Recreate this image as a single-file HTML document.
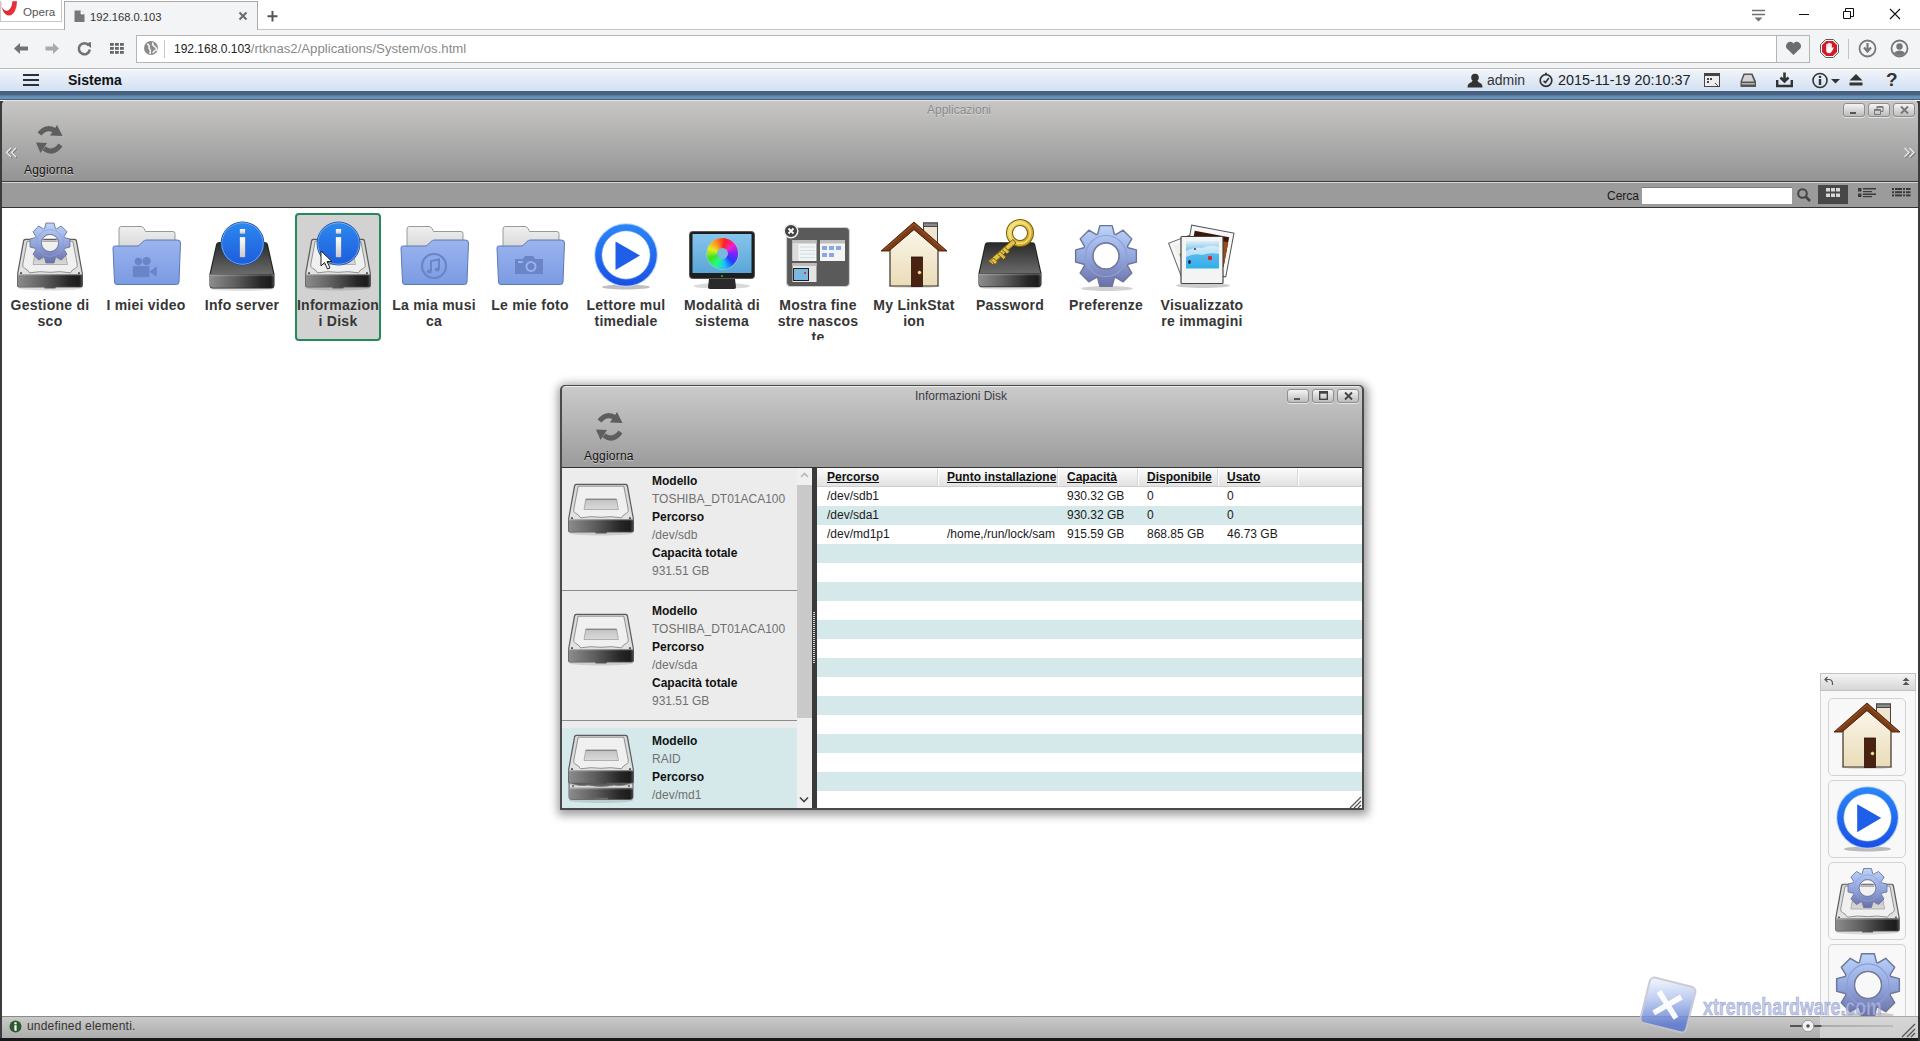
<!DOCTYPE html>
<html><head><meta charset="utf-8">
<style>
*{margin:0;padding:0;box-sizing:border-box}
html,body{width:1920px;height:1041px;overflow:hidden;background:#fff;font-family:"Liberation Sans",sans-serif;position:relative}
.a{position:absolute}
svg{position:absolute;overflow:visible}
</style></head><body>
<!-- browser tab strip -->
<div class="a" style="left:0;top:0;width:1920px;height:29px;background:#fff"></div>
<div class="a" style="left:0;top:29px;width:1920px;height:1px;background:#c6c6c6"></div>
<div class="a" style="left:0;top:0;width:62px;height:22px;border-right:1px solid #c8c8c8;border-bottom:1px solid #c8c8c8;background:#fff"></div>
<div class="a" style="left:64px;top:1px;width:194px;height:29px;background:#f3f4f6;border:1px solid #a9a9a9;border-bottom:none"></div>
<!-- toolbar -->
<div class="a" style="left:0;top:30px;width:1920px;height:38px;background:#f3f4f6"></div>
<div class="a" style="left:65px;top:29px;width:192px;height:2px;background:#f3f4f6"></div>
<div class="a" style="left:0;top:68px;width:1920px;height:1px;background:#b9b9b9"></div>
<div class="a" style="left:136px;top:35px;width:1674px;height:28px;background:#fff;border:1px solid #b5b5b5"></div>
<div class="a" style="left:1776px;top:36px;width:33px;height:26px;background:#f3f4f6;border-left:1px solid #b5b5b5"></div>
<!-- app header -->
<div class="a" style="left:0;top:69px;width:1920px;height:22px;background:linear-gradient(#f2f5fa,#d2e0f2)"></div>
<div class="a" style="left:0;top:69px;width:1920px;height:1px;background:#fcfdff"></div><div class="a" style="left:0;top:90px;width:1920px;height:1px;background:#d8e6f8"></div><div class="a" style="left:0;top:91px;width:1920px;height:8px;background:linear-gradient(#465e7a 0px,#4a6686 4px,#5f8ab6 5px,#6b97c2 8px)"></div><div class="a" style="left:0;top:99px;width:1920px;height:1px;background:#505c6c"></div>
<!-- apps window -->
<div class="a" style="left:0;top:101px;width:1920px;height:940px;background:#3c3c3c"></div>
<div class="a" style="left:2px;top:100px;width:1916px;height:82px;border-radius:5px 5px 0 0;background:linear-gradient(#c8c7c6,#939393);border-top:1px solid #e6e6e6"></div>
<div class="a" style="left:2px;top:181px;width:1916px;height:1px;background:#3a3a3a"></div>
<div class="a" style="left:2px;top:182px;width:1916px;height:1px;background:#d8d8d8"></div>
<div class="a" style="left:2px;top:183px;width:1916px;height:24px;background:#9b9b9b"></div>
<div class="a" style="left:2px;top:207px;width:1916px;height:1px;background:#333"></div>
<div class="a" style="left:2px;top:208px;width:1916px;height:808px;background:#fff"></div>
<div class="a" style="left:2px;top:1016px;width:1916px;height:22px;background:linear-gradient(#c9c9c9,#adadad);border-top:1px solid #8a8a8a"></div>

<div class="a" style="left:0;top:1038px;width:1920px;height:3px;background:#181818"></div>

<svg width="0" height="0" style="position:absolute;left:0;top:0">
<defs>
<linearGradient id="gTop" x1="0" y1="0" x2="0" y2="1"><stop offset="0" stop-color="#d8d8d8"/><stop offset="1" stop-color="#e2e2e2"/></linearGradient>
<linearGradient id="gFront" x1="0" y1="0" x2="1" y2="0"><stop offset="0" stop-color="#8c8c8c"/><stop offset="0.4" stop-color="#5e5e5e"/><stop offset="0.8" stop-color="#262626"/><stop offset="0.95" stop-color="#1c1c1c"/><stop offset="1" stop-color="#4a4a4a"/></linearGradient>
<linearGradient id="gFrontV" x1="0" y1="0" x2="0" y2="1"><stop offset="0" stop-color="#fff" stop-opacity="0.35"/><stop offset="0.5" stop-color="#fff" stop-opacity="0"/></linearGradient>
<linearGradient id="gInner" x1="0" y1="0" x2="0" y2="1"><stop offset="0" stop-color="#c2c2c2"/><stop offset="1" stop-color="#dadada"/></linearGradient>
<linearGradient id="gBlackTop" x1="0" y1="0" x2="0" y2="1"><stop offset="0" stop-color="#2a2a2a"/><stop offset="1" stop-color="#6a6a6a"/></linearGradient>
<linearGradient id="gInfo" x1="0" y1="0" x2="0" y2="1"><stop offset="0" stop-color="#2c88ee"/><stop offset="1" stop-color="#1e5cdc"/></linearGradient>
<linearGradient id="gI" x1="0" y1="0" x2="0" y2="1"><stop offset="0" stop-color="#fff"/><stop offset="1" stop-color="#c8c8c8"/></linearGradient>
<linearGradient id="gFold" x1="0" y1="0" x2="0" y2="1"><stop offset="0" stop-color="#9ab4ee"/><stop offset="1" stop-color="#7b9be2"/></linearGradient>
<linearGradient id="gFoldBack" x1="0" y1="0" x2="0" y2="1"><stop offset="0" stop-color="#f0f0f0"/><stop offset="1" stop-color="#c4c4c4"/></linearGradient>
<linearGradient id="gGear" x1="0" y1="0" x2="0" y2="1"><stop offset="0" stop-color="#bcd4fa"/><stop offset="0.5" stop-color="#94a8e0"/><stop offset="1" stop-color="#6a70a8"/></linearGradient>
<linearGradient id="gHouse" x1="0" y1="0" x2="0" y2="1"><stop offset="0" stop-color="#fbf6ea"/><stop offset="1" stop-color="#eadcb8"/></linearGradient>
<linearGradient id="gKey" x1="0" y1="0" x2="1" y2="1"><stop offset="0" stop-color="#f6e27a"/><stop offset="1" stop-color="#c8a020"/></linearGradient>
<linearGradient id="gScreen" x1="0" y1="0" x2="0" y2="1"><stop offset="0" stop-color="#86c4ec"/><stop offset="1" stop-color="#5aa6d8"/></linearGradient>
<linearGradient id="gSky" x1="0" y1="0" x2="0" y2="1"><stop offset="0" stop-color="#e0eef8"/><stop offset="0.45" stop-color="#5ab8ec"/><stop offset="1" stop-color="#30b0e8"/></linearGradient>
<linearGradient id="gPlay" x1="0" y1="0" x2="0" y2="1"><stop offset="0" stop-color="#2a86f8"/><stop offset="1" stop-color="#1a50e4"/></linearGradient>
<linearGradient id="gBtn" x1="0" y1="0" x2="0" y2="1"><stop offset="0" stop-color="#f2f2f2"/><stop offset="1" stop-color="#bdbdbd"/></linearGradient>

<symbol id="hdd" viewBox="0 0 66 52" overflow="visible">
 <ellipse cx="33" cy="50" rx="32" ry="2.5" fill="#000" opacity="0.13"/>
 <path d="M8 0.7 H58 Q59.5 0.7 60 2.5 L66 36 V47.5 Q66 49.5 64 49.5 H38.5 V50.5 H27.5 V49.5 H2 Q0 49.5 0 47.5 V36 L6 2.5 Q6.5 0.7 8 0.7Z" fill="#5c5c5c"/>
 <path d="M8.8 1.9 H57.2 Q58.4 1.9 58.8 3.2 L64.8 36 H1.2 L7.2 3.2 Q7.6 1.9 8.8 1.9Z" fill="url(#gTop)"/>
 <path d="M10.2 3.2 H55.8 L60.2 26 Q60.8 29 58.6 30.2 Q55 31.5 53.5 34.8 Q43 32.8 33 34.3 Q23 32.8 12.5 34.8 Q11 31.5 7.4 30.2 Q5.2 29 5.8 26 Z" fill="#f0f0f0" stroke="#7a7a7a" stroke-width="0.8"/>
 <path d="M17.8 16.1 H48.6 L50.4 26.5 H16Z" fill="url(#gInner)" stroke="#8c8c8c" stroke-width="0.6"/>
 <path d="M17.8 16.3 H48.6" stroke="#777" stroke-width="0.9"/>
 <circle cx="4" cy="35.2" r="1.1" fill="#555"/><circle cx="62" cy="35.2" r="1.1" fill="#555"/>
 <path d="M0.7 36 H65.3 V47.3 Q65.3 48.8 63.8 48.8 H38.5 V49.8 H27.5 V48.8 H2.2 Q0.7 48.8 0.7 47.3Z" fill="url(#gFront)"/>
 <path d="M0.7 36 H65.3 V37.2 H0.7Z" fill="#c8c8c8" opacity="0.6"/>
</symbol>

<symbol id="hddblack" viewBox="0 0 66 52" overflow="visible">
 <ellipse cx="33" cy="50.5" rx="32" ry="2.5" fill="#000" opacity="0.12"/>
 <path d="M10 4 H56 Q58.5 4 59 6.5 L65.5 36 V47 Q65.5 50.5 62 50.5 H4 Q0.5 50.5 0.5 47 V36 L7 6.5 Q7.5 4 10 4Z" fill="#222"/>
 <path d="M10.5 5 H55.5 Q57.5 5 58 7 L64.3 36 H1.7 L8 7 Q8.5 5 10.5 5Z" fill="url(#gBlackTop)"/>
 <path d="M1 36.5 H65 V47 Q65 49.8 62 49.8 H4 Q1 49.8 1 47Z" fill="url(#gFront)"/>
 <path d="M1 36.5 H65 V41 H1Z" fill="url(#gFrontV)"/>
</symbol>

<symbol id="info" viewBox="0 0 46 46" overflow="visible">
 <circle cx="23" cy="23" r="22.4" fill="#1d4c9a"/>
 <circle cx="23" cy="23" r="21.6" fill="#78b0f4"/>
 <circle cx="23" cy="23" r="20.8" fill="url(#gInfo)"/>
 <rect x="20.3" y="8.2" width="5.4" height="4.8" fill="url(#gI)"/>
 <rect x="20.3" y="16.5" width="5.4" height="20.5" fill="url(#gI)"/>
</symbol>

<symbol id="gear" viewBox="-32 -32 64 64" overflow="visible">
 <path id="gearpath" d="M-8.99 -21.71 L-8.28 -21.99 L-6.16 -30.38 L6.16 -30.38 L8.28 -21.99 L8.99 -21.71 L9.70 -21.41 L17.13 -25.84 L25.84 -17.13 L21.41 -9.70 L21.71 -8.99 L21.99 -8.28 L30.38 -6.16 L30.38 6.16 L21.99 8.28 L21.71 8.99 L21.41 9.70 L25.84 17.13 L17.13 25.84 L9.70 21.41 L8.99 21.71 L8.28 21.99 L6.16 30.38 L-6.16 30.38 L-8.28 21.99 L-8.99 21.71 L-9.70 21.41 L-17.13 25.84 L-25.84 17.13 L-21.41 9.70 L-21.71 8.99 L-21.99 8.28 L-30.38 6.16 L-30.38 -6.16 L-21.99 -8.28 L-21.71 -8.99 L-21.41 -9.70 L-25.84 -17.13 L-17.13 -25.84 L-9.70 -21.41Z M13 0 A13 13 0 1 0 -13 0 A13 13 0 1 0 13 0Z" fill-rule="evenodd" fill="url(#gGear)" stroke="#6c7696" stroke-width="1.4" stroke-linejoin="round"/>
 <circle r="20.5" fill="none" stroke="#8e9ed4" stroke-width="1.1"/>
 <circle r="13" fill="none" stroke="#767c9c" stroke-width="1.3"/><circle r="11.8" fill="none" stroke="#fff" stroke-width="1" opacity="0.7"/>
</symbol>

<symbol id="folder" viewBox="0 0 70 60" overflow="visible">
 <path d="M7 3 Q7 0.5 9.5 0.5 H29 Q31 0.5 32 2.5 L33.5 5.5 H61 Q63 5.5 63 7.5 V40 H7Z" fill="url(#gFoldBack)" stroke="#9a9a9a" stroke-width="1"/>
 <path d="M1 22 Q1 20 3 20 H25 Q27 20 28.5 18 L31 15.5 Q32.5 14 34.5 14 H65.5 Q68.5 14 68.5 17 L67 56 Q67 58.5 64.5 58.5 H5 Q2.5 58.5 2.5 56Z" fill="url(#gFold)" stroke="#5f78b8" stroke-width="1"/>
</symbol>

<symbol id="house" viewBox="0 0 66 65" overflow="visible">
 <ellipse cx="33" cy="64" rx="26" ry="2" fill="#000" opacity="0.15"/>
 <rect x="42.5" y="1" width="14" height="22" fill="#f0e6d0" stroke="#444" stroke-width="1"/>
 <rect x="42.5" y="1" width="14" height="3.5" fill="#8a8a8a" stroke="#444" stroke-width="1"/>
 <path d="M9 27 L33 7 L57 27 V64 H9Z" fill="url(#gHouse)" stroke="#3a3028" stroke-width="1.2"/>
 <path d="M33 0 L66 29 H58 L33 7.5 L8 29 H0Z" fill="#7c3c16" stroke="#4a1e08" stroke-width="0.9" stroke-linejoin="round"/>
 <path d="M33 2 L63 28 M33 2 L3 28" stroke="#9a5428" stroke-width="1"/>
 <rect x="30.5" y="35" width="11" height="29.5" fill="#4a2212" stroke="#2a1208" stroke-width="0.8"/>
 <circle cx="38.5" cy="50.5" r="1.7" fill="#f8e8a0" stroke="#a08040" stroke-width="0.4"/>
</symbol>

<symbol id="play" viewBox="0 0 66 66" overflow="visible">
 <ellipse cx="33" cy="64" rx="24" ry="2.5" fill="#000" opacity="0.25"/>
 <circle cx="33" cy="32" r="31.8" fill="#b8d4f8"/>
 <circle cx="33" cy="32" r="30.8" fill="url(#gPlay)"/>
 <circle cx="33" cy="32" r="24.2" fill="#fff" stroke="#5a9af0" stroke-width="0.6"/>
 <path d="M22.5 18.5 L47 32.5 L22.5 47Z" fill="#1f5ee8"/>
</symbol>
</defs></svg>
<!-- opera logo & tab -->
<svg style="left:0;top:0" width="20" height="20"><defs><linearGradient id="op" x1="0" y1="0" x2="1" y2="1"><stop offset="0" stop-color="#a80c18"/><stop offset="1" stop-color="#ff3a44"/></linearGradient><clipPath id="opc"><rect x="1" y="1.2" width="18" height="18"/></clipPath></defs><path clip-path="url(#opc)" fill-rule="evenodd" fill="url(#op)" d="M1 1.5 A8 14 0 1 0 17 1.5 A8 14 0 1 0 1 1.5Z M0.5 0 A6 11 0 1 0 12.5 0 A6 11 0 1 0 0.5 0Z"/></svg><div class="a" style="left:0;top:1px;width:1px;height:21px;background:#c8c8c8"></div>
<div class="a" style="left:23px;top:4px;font-size:11.6px;line-height:16px;color:#555">Opera</div>
<svg style="left:74px;top:10px" width="12" height="13"><path d="M0.5 0.5 H7 L10.5 4 V12 H0.5Z" fill="#777"/><path d="M7 0.5 V4 H10.5" fill="#fff" stroke="#f3f4f6" stroke-width="0.8"/></svg>
<div class="a" style="left:90px;top:9px;font-size:11.2px;line-height:16px;color:#333">192.168.0.103</div>
<svg style="left:238px;top:11px" width="10" height="10"><path d="M1.5 1.5 L8.5 8.5 M8.5 1.5 L1.5 8.5" stroke="#6a6a6a" stroke-width="2"/></svg>
<svg style="left:267px;top:11px" width="12" height="11"><path d="M5.5 0 V10.5 M0.5 5.2 H10.5" stroke="#555" stroke-width="2"/></svg>
<!-- window controls -->
<svg style="left:1752px;top:9px" width="14" height="14"><path d="M0 1.5 H13 M0 5.5 H13" stroke="#707070" stroke-width="1.6"/><path d="M2.5 8.5 H10.5 L6.5 12.5Z" fill="#707070"/></svg>
<div class="a" style="left:1799px;top:14px;width:10px;height:1px;background:#111"></div>
<svg style="left:1843px;top:8px" width="12" height="12"><path d="M0.5 3.5 H7.5 V10.5 H0.5Z M2.5 3.5 V0.5 H10.5 V8.5 H7.5" fill="none" stroke="#111" stroke-width="1"/></svg>
<svg style="left:1889px;top:8px" width="12" height="12"><path d="M1 1 L11 11 M11 1 L1 11" stroke="#111" stroke-width="1.1"/></svg>
<!-- nav buttons -->
<svg style="left:13px;top:42px" width="16" height="13"><path d="M1 6.5 L7 1 V4.5 H15 V8.5 H7 V12Z" fill="#727272"/></svg>
<svg style="left:45px;top:42px" width="15" height="13"><path d="M14 6.5 L8 1 V4.5 H0.5 V8.5 H8 V12Z" fill="#a9a9a9"/></svg>
<svg style="left:77px;top:41px" width="15" height="15"><path d="M11.8 4.5 A5.5 5.5 0 1 0 12.8 8.5" fill="none" stroke="#727272" stroke-width="2.6"/><path d="M8.5 2.5 L14 1 L14 7Z" fill="#727272"/></svg>
<svg style="left:110px;top:43px" width="15" height="12"><g fill="#666"><rect x="0" y="0" width="3.8" height="2.8"/><rect x="0" y="4" width="3.8" height="2.8"/><rect x="0" y="8" width="3.8" height="2.8"/><rect x="5" y="0" width="3.8" height="2.8"/><rect x="5" y="4" width="3.8" height="2.8"/><rect x="5" y="8" width="3.8" height="2.8"/><rect x="10" y="0" width="3.8" height="2.8"/><rect x="10" y="4" width="3.8" height="2.8"/><rect x="10" y="8" width="3.8" height="2.8"/></g></svg>
<svg style="left:144px;top:41px" width="15" height="15"><circle cx="7" cy="7" r="7" fill="#8a8a8a"/><path d="M3 3 Q6 4 5 7 Q7 9 6 13 M9 1.5 Q8 4 10 5 Q12 6 13 9 Q10 9 9 12" fill="none" stroke="#f3f4f6" stroke-width="1.6"/></svg>
<div class="a" style="left:164px;top:40px;width:1px;height:18px;background:#c8c8c8"></div>
<div class="a" style="left:174px;top:41px;font-size:13.2px;line-height:16px;color:#8a8a8a;white-space:pre"><span style="color:#222;font-size:12px">192.168.0.103</span>/rtknas2/Applications/System/os.html</div>
<svg style="left:1785px;top:41px" width="17" height="15"><path d="M8.5 14 L1.8 7.5 A4 4 0 0 1 8.5 2.5 A4 4 0 0 1 15.2 7.5Z" fill="#6d6d6d"/></svg>
<svg style="left:1820px;top:39px" width="19" height="19"><path d="M5.6 0.5 H13.4 L18.5 5.6 V13.4 L13.4 18.5 H5.6 L0.5 13.4 V5.6Z" fill="#fff" stroke="#5a5a5a" stroke-width="1"/><path d="M6.1 2 H12.9 L17 6.1 V12.9 L12.9 17 H6.1 L2 12.9 V6.1Z" fill="#d41c26"/><path d="M6.2 9.5 V5.6 Q6.2 4.9 6.9 4.9 Q7.6 4.9 7.6 5.6 V4.6 Q7.6 3.9 8.3 3.9 Q9 3.9 9 4.6 V4.4 Q9 3.7 9.7 3.7 Q10.4 3.7 10.4 4.4 V5 Q10.4 4.4 11.1 4.4 Q11.8 4.4 11.8 5.1 V9.2 L12.6 8.4 Q13.3 7.9 13.9 8.5 L12 12.3 Q11 14.2 9.1 14.2 Q6.2 14.2 6.2 11.2Z" fill="#fff"/><path d="M7.6 5.2 V8 M9 4.6 V8 M10.4 4.6 V8" stroke="#e8c0c0" stroke-width="0.5"/></svg>
<div class="a" style="left:1848px;top:39px;width:1px;height:20px;background:#c4c4c4"></div>
<svg style="left:1858px;top:39px" width="19" height="19"><circle cx="9.5" cy="9.5" r="8" fill="none" stroke="#777" stroke-width="1.8"/><path d="M9.5 4 V11 M6 8.5 L9.5 12.5 L13 8.5" fill="none" stroke="#777" stroke-width="2.2"/></svg>
<svg style="left:1890px;top:39px" width="19" height="19"><defs><clipPath id="pc"><circle cx="9.5" cy="9.5" r="7.2"/></clipPath></defs><circle cx="9.5" cy="9.5" r="8" fill="none" stroke="#777" stroke-width="1.8"/><g clip-path="url(#pc)" fill="#777"><circle cx="9.5" cy="7.5" r="3.2"/><ellipse cx="9.5" cy="17" rx="6.5" ry="5.5"/></g></svg>
<!-- app header -->
<svg style="left:23px;top:74px" width="16" height="13"><path d="M0 1 H16 M0 6 H16 M0 11 H16" stroke="#2b2f36" stroke-width="2"/></svg>
<div class="a" style="left:68px;top:72px;font-size:14px;line-height:16px;font-weight:bold;color:#111">Sistema</div>
<svg style="left:1467px;top:73px" width="16" height="15"><circle cx="8" cy="4.5" r="3.8" fill="#333"/><path d="M5.5 7.5 Q5 9.5 2 10.5 Q0.5 11.3 0.5 14.5 H15.5 Q15.5 11.3 14 10.5 Q11 9.5 10.5 7.5Z" fill="#333"/></svg>
<div class="a" style="left:1487px;top:72px;font-size:14px;line-height:16px;color:#333">admin</div>
<svg style="left:1539px;top:73px" width="15" height="15"><circle cx="7" cy="7.5" r="5.8" fill="none" stroke="#333" stroke-width="1.7"/><path d="M4.5 8 L6.5 9.5 L9.8 5" fill="none" stroke="#333" stroke-width="1.6"/><path d="M6 0.5 H8" stroke="#333" stroke-width="1.5"/></svg>
<div class="a" style="left:1558px;top:72px;font-size:14.4px;line-height:16px;color:#222;white-space:pre">2015-11-19 20:10:37</div>
<svg style="left:1704px;top:73px" width="17" height="15"><rect x="0.5" y="0.5" width="15" height="13" fill="#eee" stroke="#444"/><rect x="0.5" y="0.5" width="15" height="2.5" fill="#444"/><rect x="3" y="5" width="2" height="2" fill="#444"/><rect x="3" y="8" width="2" height="2" fill="#444"/><rect x="6" y="5" width="2" height="2" fill="#444"/><path d="M11 10 L14 13" stroke="#444"/></svg>
<svg style="left:1740px;top:73px" width="17" height="15"><path d="M3.5 0.5 H12.5 L16 8.5 V14 H0.5 V8.5Z" fill="#555"/><path d="M4.6 2 H11.4 L14 8.5 H2Z" fill="#d4d4d4"/><rect x="1.8" y="10.2" width="13" height="1.2" fill="#ccc"/></svg>
<svg style="left:1776px;top:72px" width="17" height="16"><path d="M8.5 0.5 V9 M4.5 5.5 L8.5 9.5 L12.5 5.5" fill="none" stroke="#333" stroke-width="2.6"/><path d="M1.2 8 V14 H15.8 V8" fill="none" stroke="#333" stroke-width="2.4"/></svg>
<svg style="left:1812px;top:72px" width="30" height="17"><circle cx="8" cy="8.5" r="7" fill="none" stroke="#333" stroke-width="1.6"/><rect x="6.8" y="3.8" width="2.4" height="2.2" fill="#333"/><rect x="6.8" y="7" width="2.4" height="6" fill="#333"/><path d="M19 7 H28 L23.5 11.5Z" fill="#333"/></svg>
<svg style="left:1849px;top:73px" width="14" height="14"><path d="M7 1 L13.5 7.5 H0.5Z" fill="#333"/><rect x="0.5" y="9.5" width="13" height="3" fill="#333"/></svg>
<div class="a" style="left:1886px;top:69px;font-size:19px;line-height:22px;font-weight:bold;color:#333">?</div>
<svg style="left:36px;top:125px" width="28" height="30"><path d="M3.5 9 Q11 0 19.5 6" fill="none" stroke="#5e5e5e" stroke-width="5"/><path d="M21 0 L26.5 11 L14 10.5Z" fill="#5e5e5e"/><path d="M24.5 20 Q17 30 8 23.5" fill="none" stroke="#5e5e5e" stroke-width="5"/><path d="M0 17.5 L11 18 L4.5 28Z" fill="#5e5e5e"/></svg>
<div class="a" style="left:24px;top:163px;font-size:12px;line-height:14px;color:#111;letter-spacing:0.2px;text-shadow:0 1px 1px rgba(255,255,255,0.6)">Aggiorna</div>
<svg style="left:5px;top:147px" width="14" height="12"><path d="M6 1 L1.5 5.5 L6 10 M11 1 L6.5 5.5 L11 10" fill="none" stroke="#777" stroke-width="1.6" transform="translate(0.8 0.8)"/><path d="M6 1 L1.5 5.5 L6 10 M11 1 L6.5 5.5 L11 10" fill="none" stroke="#eee" stroke-width="1.3"/></svg>
<svg style="left:1903px;top:147px" width="14" height="12"><path d="M1.5 1 L6 5.5 L1.5 10 M6.5 1 L11 5.5 L6.5 10" fill="none" stroke="#777" stroke-width="1.6" transform="translate(0.8 0.8)"/><path d="M1.5 1 L6 5.5 L1.5 10 M6.5 1 L11 5.5 L6.5 10" fill="none" stroke="#eee" stroke-width="1.3"/></svg>
<div class="a" style="left:927px;top:103px;font-size:12px;line-height:14px;color:#8a8a8a;text-shadow:0 1px 0 rgba(255,255,255,0.4)">Applicazioni</div>
<div class="a" style="left:1843px;top:103px;width:22px;height:14px;border:1px solid #8e8e8e;border-radius:3px;background:linear-gradient(#f4f4f4,#bcbcbc);box-shadow:0 1px 0 rgba(255,255,255,0.6)"></div><div class="a" style="left:1850px;top:112px;width:6px;height:2px;background:#555"></div><div class="a" style="left:1868px;top:103px;width:22px;height:14px;border:1px solid #8e8e8e;border-radius:3px;background:linear-gradient(#f4f4f4,#bcbcbc);box-shadow:0 1px 0 rgba(255,255,255,0.6)"></div><svg style="left:1874px;top:106px" width="10" height="9"><path d="M0.5 3.5 H6.5 V8.5 H0.5Z M3 3.5 V0.5 H9 V5.5 H6.5" fill="none" stroke="#777" stroke-width="1"/><rect x="3" y="0.5" width="6" height="1.3" fill="#777"/><rect x="0.5" y="3.5" width="6" height="1.3" fill="#777"/></svg><div class="a" style="left:1893px;top:103px;width:22px;height:14px;border:1px solid #8e8e8e;border-radius:3px;background:linear-gradient(#f4f4f4,#bcbcbc);box-shadow:0 1px 0 rgba(255,255,255,0.6)"></div><svg style="left:1900px;top:105px" width="9" height="10"><path d="M1 1.5 L8 8.5 M8 1.5 L1 8.5" stroke="#777" stroke-width="1.8"/></svg>
<div class="a" style="left:1607px;top:189px;font-size:12px;line-height:14px;color:#1a1a1a">Cerca</div>
<div class="a" style="left:1642px;top:187px;width:150px;height:17px;background:#fff;border-top:1px solid #7a7a7a"></div>
<svg style="left:1797px;top:188px" width="15" height="14"><circle cx="5.5" cy="5.5" r="4.3" fill="none" stroke="#444" stroke-width="2"/><path d="M8.5 8.5 L13 13" stroke="#444" stroke-width="2.6"/></svg>
<div class="a" style="left:1818px;top:185px;width:30px;height:19px;background:#474747"></div>
<svg style="left:1826px;top:188px" width="15" height="10"><g fill="#d8d8d8"><rect x="0" y="0" width="4" height="3.5"/><rect x="5" y="0" width="4" height="3.5"/><rect x="10" y="0" width="4" height="3.5"/><rect x="0" y="5.5" width="4" height="3.5"/><rect x="5" y="5.5" width="4" height="3.5"/><rect x="10" y="5.5" width="4" height="3.5"/></g></svg>
<svg style="left:1858px;top:188px" width="19" height="10"><g fill="#3a3a3a"><rect x="0" y="0" width="3.5" height="3.5"/><rect x="0" y="5.5" width="3.5" height="3.5"/><rect x="5" y="0" width="13" height="1.5"/><rect x="5" y="3" width="9" height="1.2"/><rect x="5" y="5.5" width="13" height="1.5"/><rect x="5" y="8" width="9" height="1.2"/></g></svg>
<svg style="left:1892px;top:188px" width="19" height="9"><g fill="#3a3a3a"><rect x="0" y="0" width="2" height="2"/><rect x="0" y="3.2" width="2" height="2"/><rect x="0" y="6.4" width="2" height="2"/><rect x="3" y="0" width="7" height="2"/><rect x="3" y="3.2" width="7" height="2"/><rect x="3" y="6.4" width="7" height="2"/><rect x="11" y="0" width="2" height="2"/><rect x="11" y="3.2" width="2" height="2"/><rect x="11" y="6.4" width="2" height="2"/><rect x="14" y="0" width="4.5" height="2"/><rect x="14" y="3.2" width="4.5" height="2"/><rect x="14" y="6.4" width="4.5" height="2"/></g></svg>
<div class="a" style="left:295px;top:213px;width:86px;height:128px;border:2px solid #27885e;border-radius:4px;background:#d2d2d2"></div>
<div class="a" style="left:2px;top:297px;width:96px;height:43px;overflow:hidden;text-align:center;font-size:14px;line-height:16px;font-weight:bold;color:#363636;letter-spacing:0.25px">Gestione di<br>sco</div>
<div class="a" style="left:98px;top:297px;width:96px;height:43px;overflow:hidden;text-align:center;font-size:14px;line-height:16px;font-weight:bold;color:#363636;letter-spacing:0.25px">I miei video</div>
<div class="a" style="left:194px;top:297px;width:96px;height:43px;overflow:hidden;text-align:center;font-size:14px;line-height:16px;font-weight:bold;color:#363636;letter-spacing:0.25px">Info server</div>
<div class="a" style="left:290px;top:297px;width:96px;height:43px;overflow:hidden;text-align:center;font-size:14px;line-height:16px;font-weight:bold;color:#363636;letter-spacing:0.25px">Informazion<br>i Disk</div>
<div class="a" style="left:386px;top:297px;width:96px;height:43px;overflow:hidden;text-align:center;font-size:14px;line-height:16px;font-weight:bold;color:#363636;letter-spacing:0.25px">La mia musi<br>ca</div>
<div class="a" style="left:482px;top:297px;width:96px;height:43px;overflow:hidden;text-align:center;font-size:14px;line-height:16px;font-weight:bold;color:#363636;letter-spacing:0.25px">Le mie foto</div>
<div class="a" style="left:578px;top:297px;width:96px;height:43px;overflow:hidden;text-align:center;font-size:14px;line-height:16px;font-weight:bold;color:#363636;letter-spacing:0.25px">Lettore mul<br>timediale</div>
<div class="a" style="left:674px;top:297px;width:96px;height:43px;overflow:hidden;text-align:center;font-size:14px;line-height:16px;font-weight:bold;color:#363636;letter-spacing:0.25px">Modalità di<br>sistema</div>
<div class="a" style="left:770px;top:297px;width:96px;height:43px;overflow:hidden;text-align:center;font-size:14px;line-height:16px;font-weight:bold;color:#363636;letter-spacing:0.25px">Mostra fine<br>stre nascos<br>te</div>
<div class="a" style="left:866px;top:297px;width:96px;height:43px;overflow:hidden;text-align:center;font-size:14px;line-height:16px;font-weight:bold;color:#363636;letter-spacing:0.25px">My LinkStat<br>ion</div>
<div class="a" style="left:962px;top:297px;width:96px;height:43px;overflow:hidden;text-align:center;font-size:14px;line-height:16px;font-weight:bold;color:#363636;letter-spacing:0.25px">Password</div>
<div class="a" style="left:1058px;top:297px;width:96px;height:43px;overflow:hidden;text-align:center;font-size:14px;line-height:16px;font-weight:bold;color:#363636;letter-spacing:0.25px">Preferenze</div>
<div class="a" style="left:1154px;top:297px;width:96px;height:43px;overflow:hidden;text-align:center;font-size:14px;line-height:16px;font-weight:bold;color:#363636;letter-spacing:0.25px">Visualizzato<br>re immagini</div>
<svg style="left:17px;top:238px" width="66" height="52"><use href="#hdd" width="66" height="52"/></svg>
<svg style="left:29px;top:222px" width="42" height="42"><use href="#gear" width="42" height="42"/></svg>
<svg style="left:112px;top:226px" width="70" height="60"><use href="#folder" width="70" height="60"/></svg>
<svg style="left:131px;top:255px;transform:scale(0.92);transform-origin:0 100%" width="34" height="24"><g fill="#6a84c8"><circle cx="8" cy="5" r="4"/><circle cx="17" cy="4.5" r="4.5"/><rect x="2" y="10" width="18" height="12"/><path d="M20 16 L27 11 V21Z"/><rect x="26" y="11" width="2" height="10"/></g></svg>
<svg style="left:209px;top:238px" width="66" height="52"><use href="#hddblack" width="66" height="52"/></svg>
<svg style="left:220px;top:221px" width="45" height="45"><use href="#info" width="45" height="45"/></svg>
<svg style="left:305px;top:238px" width="66" height="52"><use href="#hdd" width="66" height="52"/></svg>
<svg style="left:316px;top:221px" width="45" height="45"><use href="#info" width="45" height="45"/></svg>
<svg style="left:320px;top:250px" width="14" height="20"><path d="M1 1 V16 L4.5 12.5 L7.5 19 L10 18 L7 11.5 L12 11.5Z" fill="#fff" stroke="#222" stroke-width="1"/></svg>
<svg style="left:400px;top:226px" width="70" height="60"><use href="#folder" width="70" height="60"/></svg>
<svg style="left:420px;top:252px" width="30" height="30"><circle cx="14" cy="14" r="12" fill="none" stroke="#6a84c8" stroke-width="2.2"/><path d="M11 19 V9 L19 7.5 V17" fill="none" stroke="#6a84c8" stroke-width="2"/><ellipse cx="9.3" cy="19.5" rx="2.5" ry="2" fill="#6a84c8"/><ellipse cx="17.3" cy="17.5" rx="2.5" ry="2" fill="#6a84c8"/></svg>
<svg style="left:496px;top:226px" width="70" height="60"><use href="#folder" width="70" height="60"/></svg>
<svg style="left:515px;top:255px" width="30" height="22"><g fill="#6a84c8"><path d="M0 4 H8 L10 1 H18 L20 4 H28 V19 H0Z"/></g><circle cx="16" cy="11.5" r="5.5" fill="#9ab0ea"/><circle cx="16" cy="11.5" r="3.5" fill="#6a84c8"/><rect x="3" y="6" width="5" height="2" fill="#9ab0ea"/></svg>
<svg style="left:593px;top:223px" width="66" height="66"><use href="#play" width="66" height="66"/></svg>
<svg style="left:689px;top:231px" width="66" height="59"><ellipse cx="33" cy="55" rx="28" ry="3" fill="#000" opacity="0.15"/><rect x="0.5" y="0.5" width="65" height="47" rx="3" fill="#1e1e1e" stroke="#555" stroke-width="1"/><rect x="3.5" y="3" width="59" height="39" fill="url(#gScreen)"/><circle cx="33" cy="45" r="0.9" fill="#3c3"/><path d="M20 48 H46 L47 56 Q47 58 45 58 H21 Q19 58 19 56Z" fill="#2a2a2a"/></svg>
<div class="a" style="left:707px;top:238px;width:31px;height:31px;border-radius:50%;background:conic-gradient(from 10deg,#ff2020,#ff20c0,#8020ff,#2040ff,#20c0ff,#20ff80,#40e020,#e0f020,#ff9020,#ff2020);box-shadow:0 0 0 0.8px #9cc"></div><div class="a" style="left:717px;top:248px;width:11px;height:11px;border-radius:50%;background:#7ab8e0"></div>
<svg style="left:784px;top:223px" width="68" height="66"><rect x="2.5" y="4.5" width="63" height="59" rx="4" fill="#5a5a5a" stroke="#d0d0d0" stroke-width="1.2"/>
<rect x="8.5" y="17" width="24" height="21" fill="#f4f4f4"/><rect x="8.5" y="17" width="24" height="3.5" fill="#bdbdbd"/><rect x="8.5" y="20.5" width="6" height="17.5" fill="#dcdcdc"/><path d="M16 24 H31 M16 27.5 H31 M16 31 H31 M16 34.5 H31" stroke="#c8e0e8" stroke-width="1.2"/>
<rect x="36" y="17" width="25" height="21" fill="#f4f4f4"/><rect x="36" y="17" width="25" height="3.5" fill="#bdbdbd"/><g fill="#8aa8e0"><rect x="38" y="23" width="5" height="4"/><rect x="45" y="23" width="5" height="4"/><rect x="52" y="23" width="5" height="4"/><rect x="38" y="30" width="5" height="4"/><rect x="45" y="30" width="5" height="4"/></g>
<rect x="8.5" y="40" width="24" height="19" fill="#e4e4e4"/><rect x="8.5" y="40" width="24" height="3" fill="#bdbdbd"/><rect x="9" y="45" width="16" height="13" fill="#222"/><rect x="10" y="46" width="14" height="11" fill="#7ab8e0"/><circle cx="21" cy="50" r="1" fill="#c22"/>
<circle cx="7" cy="8" r="6.8" fill="#444" stroke="#eee" stroke-width="1.5"/><path d="M4.5 5.5 L9.5 10.5 M9.5 5.5 L4.5 10.5" stroke="#fff" stroke-width="1.8"/></svg>
<svg style="left:881px;top:222px" width="66" height="65"><use href="#house" width="66" height="65"/></svg>
<svg style="left:978px;top:238px" width="64" height="51"><use href="#hddblack" width="64" height="51"/></svg>
<svg style="left:984px;top:219px" width="52" height="48"><g stroke-linejoin="round">
<circle cx="36" cy="14" r="10.5" fill="none" stroke="#7a5a08" stroke-width="7"/>
<circle cx="36" cy="14" r="10.5" fill="none" stroke="url(#gKey)" stroke-width="5"/>
<circle cx="36" cy="14" r="10.5" fill="none" stroke="#fae88a" stroke-width="1.5" opacity="0.8"/>
<path d="M29 20.5 L32 24 L8.5 45.5 L4.5 42 Z" fill="url(#gKey)" stroke="#7a5a08" stroke-width="1"/>
<path d="M13.5 35 L19.5 40.5 L22 38 L16 32.5Z M18 30.5 L23 35 L25.5 32.5 L20.5 28Z M9.5 39 L13.5 43 L11 45.5 L7 41.5Z" fill="url(#gKey)" stroke="#7a5a08" stroke-width="1"/>
</g></svg>
<svg style="left:1073px;top:224px" width="68" height="68"><ellipse cx="34" cy="64.5" rx="26" ry="2.5" fill="#000" opacity="0.18"/><use href="#gear" x="1" y="0" width="64" height="64"/></svg>
<svg style="left:1168px;top:224px" width="67" height="64"><ellipse cx="35" cy="61.5" rx="27" ry="2.5" fill="#000" opacity="0.2"/>
<g transform="translate(0.6 19.2) rotate(-21)"><rect x="0" y="0" width="36" height="40" fill="#f6f6f6" stroke="#666" stroke-width="1"/><rect x="4" y="4" width="28" height="22" fill="#eef2ea"/><rect x="6" y="14" width="4" height="3" fill="#7b3"/></g>
<g transform="translate(23.7 1.2) rotate(10.6)"><rect x="0" y="0" width="43" height="44.6" fill="#f8f8f8" stroke="#555" stroke-width="1"/><rect x="4" y="5" width="35" height="30" fill="#3a1608"/><rect x="30" y="10" width="9" height="25" fill="#9a4a12"/></g>
<rect x="13" y="12.5" width="42" height="47" rx="1" fill="#f4f4f4" stroke="#444" stroke-width="1.2"/><rect x="18" y="17" width="33" height="27.5" fill="url(#gSky)"/><path d="M18 27 Q28 22 34 24 Q42 20 51 23 V30 Q42 28 34 31 Q26 29 18 33Z" fill="#e8f4fc" opacity="0.7"/><circle cx="42" cy="34" r="2.2" fill="#d22"/><ellipse cx="21.5" cy="38" rx="1.4" ry="2" fill="#224"/><circle cx="27" cy="25" r="0.9" fill="#222"/></svg><div class="a" style="left:560px;top:385px;width:804px;height:425px;background:#4a4a4a;border-radius:5px 5px 0 0;box-shadow:1px 2px 10px 3px rgba(0,0,0,0.4)"></div>
<div class="a" style="left:562px;top:386px;width:800px;height:81px;background:linear-gradient(#cacaca,#9b9b9b);border-top:1px solid #ececec;border-radius:4px 4px 0 0"></div>
<div class="a" style="left:562px;top:467px;width:800px;height:1px;background:#333"></div>
<div class="a" style="left:915px;top:389px;font-size:12px;line-height:14px;color:#3c3c44">Informazioni Disk</div>
<div class="a" style="left:1287px;top:389px;width:22px;height:14px;border:1px solid #8e8e8e;border-radius:3px;background:linear-gradient(#f4f4f4,#bcbcbc);box-shadow:0 1px 0 rgba(255,255,255,0.6)"></div><div class="a" style="left:1294px;top:398px;width:6px;height:2px;background:#555"></div><div class="a" style="left:1312px;top:389px;width:22px;height:14px;border:1px solid #8e8e8e;border-radius:3px;background:linear-gradient(#f4f4f4,#bcbcbc);box-shadow:0 1px 0 rgba(255,255,255,0.6)"></div><svg style="left:1319px;top:391px" width="9" height="10"><rect x="0.7" y="0.7" width="7.6" height="7.6" fill="none" stroke="#444" stroke-width="1.4"/><rect x="0.7" y="0.7" width="7.6" height="2" fill="#444"/></svg><div class="a" style="left:1337px;top:389px;width:22px;height:14px;border:1px solid #8e8e8e;border-radius:3px;background:linear-gradient(#f4f4f4,#bcbcbc);box-shadow:0 1px 0 rgba(255,255,255,0.6)"></div><svg style="left:1344px;top:391px" width="9" height="10"><path d="M1 1.5 L8 8.5 M8 1.5 L1 8.5" stroke="#444" stroke-width="1.8"/></svg>
<svg style="left:596px;top:412px" width="28" height="30"><path d="M3.5 9 Q11 0 19.5 6" fill="none" stroke="#5e5e5e" stroke-width="5"/><path d="M21 0 L26.5 11 L14 10.5Z" fill="#5e5e5e"/><path d="M24.5 20 Q17 30 8 23.5" fill="none" stroke="#5e5e5e" stroke-width="5"/><path d="M0 17.5 L11 18 L4.5 28Z" fill="#5e5e5e"/></svg>
<div class="a" style="left:584px;top:449px;font-size:12px;line-height:14px;color:#111;letter-spacing:0.2px;text-shadow:0 1px 1px rgba(255,255,255,0.5)">Aggiorna</div>
<div class="a" style="left:562px;top:468px;width:235px;height:340px;background:#ececec;overflow:hidden">
<div class="a" style="left:0;top:122px;width:235px;height:1px;background:#8c8c8c"></div>
<div class="a" style="left:0;top:252px;width:235px;height:1px;background:#8c8c8c"></div>
<div class="a" style="left:0;top:260px;width:235px;height:100px;background:#d5e9ea"></div>
<div class="a" style="left:90px;top:5px;font-size:12px;line-height:16px;font-weight:bold;color:#111;white-space:nowrap">Modello</div><div class="a" style="left:90px;top:23px;font-size:12px;line-height:16px;color:#707070;white-space:nowrap">TOSHIBA_DT01ACA100</div><div class="a" style="left:90px;top:41px;font-size:12px;line-height:16px;font-weight:bold;color:#111;white-space:nowrap">Percorso</div><div class="a" style="left:90px;top:59px;font-size:12px;line-height:16px;color:#707070;white-space:nowrap">/dev/sdb</div><div class="a" style="left:90px;top:77px;font-size:12px;line-height:16px;font-weight:bold;color:#111;white-space:nowrap">Capacità totale</div><div class="a" style="left:90px;top:95px;font-size:12px;line-height:16px;color:#707070;white-space:nowrap">931.51 GB</div>
<div class="a" style="left:90px;top:135px;font-size:12px;line-height:16px;font-weight:bold;color:#111;white-space:nowrap">Modello</div><div class="a" style="left:90px;top:153px;font-size:12px;line-height:16px;color:#707070;white-space:nowrap">TOSHIBA_DT01ACA100</div><div class="a" style="left:90px;top:171px;font-size:12px;line-height:16px;font-weight:bold;color:#111;white-space:nowrap">Percorso</div><div class="a" style="left:90px;top:189px;font-size:12px;line-height:16px;color:#707070;white-space:nowrap">/dev/sda</div><div class="a" style="left:90px;top:207px;font-size:12px;line-height:16px;font-weight:bold;color:#111;white-space:nowrap">Capacità totale</div><div class="a" style="left:90px;top:225px;font-size:12px;line-height:16px;color:#707070;white-space:nowrap">931.51 GB</div>
<div class="a" style="left:90px;top:265px;font-size:12px;line-height:16px;font-weight:bold;color:#111;white-space:nowrap">Modello</div><div class="a" style="left:90px;top:283px;font-size:12px;line-height:16px;color:#707070;white-space:nowrap">RAID</div><div class="a" style="left:90px;top:301px;font-size:12px;line-height:16px;font-weight:bold;color:#111;white-space:nowrap">Percorso</div><div class="a" style="left:90px;top:319px;font-size:12px;line-height:16px;color:#707070;white-space:nowrap">/dev/md1</div><div class="a" style="left:90px;top:337px;font-size:12px;line-height:16px;font-weight:bold;color:#111;white-space:nowrap">Capacità totale</div><div class="a" style="left:90px;top:355px;font-size:12px;line-height:16px;color:#707070;white-space:nowrap">1.82 TB</div>
</div>
<svg style="left:568px;top:483px" width="66" height="52"><use href="#hdd" width="66" height="52"/></svg>
<svg style="left:568px;top:613px" width="66" height="52"><use href="#hdd" width="66" height="52"/></svg>
<svg style="left:568px;top:778px" width="66" height="26"><ellipse cx="33" cy="22.5" rx="32" ry="2.5" fill="#000" opacity="0.12"/><path d="M0.5 2 H65.5 V18.5 Q65.5 22 62 22 H4 Q0.5 22 0.5 18.5Z" fill="#6a6a6a"/><path d="M1.5 4 Q10 9 20 7 Q33 10 46 7 Q56 9 64.5 4 V10 H1.5Z" fill="#dedede" stroke="#8a8a8a" stroke-width="0.7"/><circle cx="5" cy="8" r="1" fill="#555"/><circle cx="61" cy="8" r="1" fill="#555"/><path d="M1 10 H65 V18.5 Q65 21.3 62 21.3 H40 V19.8 H26 V21.3 H4 Q1 21.3 1 18.5Z" fill="url(#gFront)"/><path d="M1 10 H65 V14 H1Z" fill="url(#gFrontV)"/></svg>
<svg style="left:568px;top:734px" width="66" height="52"><use href="#hdd" width="66" height="52"/></svg>
<div class="a" style="left:797px;top:468px;width:15px;height:340px;background:#f0f0f0"></div>
<div class="a" style="left:797px;top:485px;width:15px;height:233px;background:#c9c9c9"></div>
<svg style="left:800px;top:472px" width="9" height="6"><path d="M1 5 L4.5 1.5 L8 5" fill="none" stroke="#b8b8b8" stroke-width="1.6"/></svg>
<svg style="left:799px;top:796px" width="10" height="7"><path d="M1 1.5 L5 5.5 L9 1.5" fill="none" stroke="#444" stroke-width="1.6"/></svg>
<div class="a" style="left:812px;top:468px;width:5px;height:340px;background:#3a3a3a"></div>
<div class="a" style="left:813px;top:612px;width:2px;height:52px;background:repeating-linear-gradient(#d8d8d8 0 1px,#3a3a3a 1px 2px)"></div>
<div class="a" style="left:817px;top:468px;width:545px;height:340px;background:#fff;overflow:hidden">
<div class="a" style="left:0;top:0;width:545px;height:19px;background:linear-gradient(#fafafa,#e2e2e2);border-top:1px solid #fff;border-bottom:1px solid #cfcfcf"></div>
<div class="a" style="left:121px;top:1px;width:1px;height:17px;background:#fff;box-shadow:-1px 0 0 #d8d8d8"></div>
<div class="a" style="left:241px;top:1px;width:1px;height:17px;background:#fff;box-shadow:-1px 0 0 #d8d8d8"></div>
<div class="a" style="left:321px;top:1px;width:1px;height:17px;background:#fff;box-shadow:-1px 0 0 #d8d8d8"></div>
<div class="a" style="left:401px;top:1px;width:1px;height:17px;background:#fff;box-shadow:-1px 0 0 #d8d8d8"></div>
<div class="a" style="left:481px;top:1px;width:1px;height:17px;background:#fff;box-shadow:-1px 0 0 #d8d8d8"></div>
<div class="a" style="left:10px;top:1px;font-size:12px;line-height:16px;font-weight:bold;color:#111;text-decoration:underline;white-space:nowrap">Percorso</div>
<div class="a" style="left:130px;top:1px;font-size:12px;line-height:16px;font-weight:bold;color:#111;text-decoration:underline;white-space:nowrap">Punto installazione</div>
<div class="a" style="left:250px;top:1px;font-size:12px;line-height:16px;font-weight:bold;color:#111;text-decoration:underline;white-space:nowrap">Capacità</div>
<div class="a" style="left:330px;top:1px;font-size:12px;line-height:16px;font-weight:bold;color:#111;text-decoration:underline;white-space:nowrap">Disponibile</div>
<div class="a" style="left:410px;top:1px;font-size:12px;line-height:16px;font-weight:bold;color:#111;text-decoration:underline;white-space:nowrap">Usato</div>
<div class="a" style="left:0;top:38px;width:545px;height:19px;background:#d5e9ea"></div>
<div class="a" style="left:0;top:76px;width:545px;height:19px;background:#d5e9ea"></div>
<div class="a" style="left:0;top:114px;width:545px;height:19px;background:#d5e9ea"></div>
<div class="a" style="left:0;top:152px;width:545px;height:19px;background:#d5e9ea"></div>
<div class="a" style="left:0;top:190px;width:545px;height:19px;background:#d5e9ea"></div>
<div class="a" style="left:0;top:228px;width:545px;height:19px;background:#d5e9ea"></div>
<div class="a" style="left:0;top:266px;width:545px;height:19px;background:#d5e9ea"></div>
<div class="a" style="left:0;top:304px;width:545px;height:19px;background:#d5e9ea"></div>
<div class="a" style="left:10px;top:20px;width:111px;overflow:hidden;font-size:12px;line-height:16px;color:#1a1a1a;white-space:nowrap">/dev/sdb1</div>
<div class="a" style="left:250px;top:20px;width:71px;overflow:hidden;font-size:12px;line-height:16px;color:#1a1a1a;white-space:nowrap">930.32 GB</div>
<div class="a" style="left:330px;top:20px;width:71px;overflow:hidden;font-size:12px;line-height:16px;color:#1a1a1a;white-space:nowrap">0</div>
<div class="a" style="left:410px;top:20px;width:71px;overflow:hidden;font-size:12px;line-height:16px;color:#1a1a1a;white-space:nowrap">0</div>
<div class="a" style="left:10px;top:39px;width:111px;overflow:hidden;font-size:12px;line-height:16px;color:#1a1a1a;white-space:nowrap">/dev/sda1</div>
<div class="a" style="left:250px;top:39px;width:71px;overflow:hidden;font-size:12px;line-height:16px;color:#1a1a1a;white-space:nowrap">930.32 GB</div>
<div class="a" style="left:330px;top:39px;width:71px;overflow:hidden;font-size:12px;line-height:16px;color:#1a1a1a;white-space:nowrap">0</div>
<div class="a" style="left:410px;top:39px;width:71px;overflow:hidden;font-size:12px;line-height:16px;color:#1a1a1a;white-space:nowrap">0</div>
<div class="a" style="left:10px;top:58px;width:111px;overflow:hidden;font-size:12px;line-height:16px;color:#1a1a1a;white-space:nowrap">/dev/md1p1</div>
<div class="a" style="left:130px;top:58px;width:111px;overflow:hidden;font-size:12px;line-height:16px;color:#1a1a1a;white-space:nowrap">/home,/run/lock/sam</div>
<div class="a" style="left:250px;top:58px;width:71px;overflow:hidden;font-size:12px;line-height:16px;color:#1a1a1a;white-space:nowrap">915.59 GB</div>
<div class="a" style="left:330px;top:58px;width:71px;overflow:hidden;font-size:12px;line-height:16px;color:#1a1a1a;white-space:nowrap">868.85 GB</div>
<div class="a" style="left:410px;top:58px;width:71px;overflow:hidden;font-size:12px;line-height:16px;color:#1a1a1a;white-space:nowrap">46.73 GB</div>
</div>
<svg style="left:1349px;top:796px" width="13" height="12"><path d="M12 1 L1 12 M12 5 L5 12 M12 9 L9 12" stroke="#555" stroke-width="1.2"/></svg><svg style="left:9px;top:1020px" width="13" height="13"><circle cx="6.5" cy="6.5" r="6" fill="#2f5a30"/><rect x="5.4" y="2.3" width="2.2" height="2" fill="#fff"/><rect x="5.4" y="5.2" width="2.2" height="5.5" fill="#fff"/></svg>
<div class="a" style="left:27px;top:1018px;font-size:12px;line-height:16px;color:#333;letter-spacing:0.2px">undefined elementi.</div>
<div class="a" style="left:1820px;top:673px;width:96px;height:365px;background:rgba(246,246,246,0.75);border-left:1px solid #d4d4d4;border-right:1px solid #dcdcdc"></div>
<div class="a" style="left:1820px;top:673px;width:96px;height:18px;background:linear-gradient(#f4f4f4,#d6d6d6);border:1px solid #c2c2c2"></div>
<svg style="left:1824px;top:676px" width="10" height="10"><path d="M3.5 1 L1 3.5 L3.5 6 M1.2 3.5 H5 Q8 3.5 8.5 7 V9" fill="none" stroke="#555" stroke-width="1.2"/></svg>
<svg style="left:1902px;top:677px" width="8" height="9"><path d="M4 0.5 L7.5 4 H0.5Z M4 4.5 L7.5 8 H0.5Z" fill="#555"/></svg>
<div class="a" style="left:1828px;top:698px;width:78px;height:78px;border:1px solid #d2d2d2;border-radius:5px;background:#f8f8f8"></div>
<div class="a" style="left:1828px;top:780px;width:78px;height:78px;border:1px solid #d2d2d2;border-radius:5px;background:#f8f8f8"></div>
<div class="a" style="left:1828px;top:862px;width:78px;height:78px;border:1px solid #d2d2d2;border-radius:5px;background:#f8f8f8"></div>
<div class="a" style="left:1828px;top:944px;width:78px;height:73px;border:1px solid #d2d2d2;border-bottom:none;border-radius:5px 5px 0 0;background:#f8f8f8"></div>
<svg style="left:1834px;top:703px" width="66" height="65"><use href="#house" width="66" height="65"/></svg>
<svg style="left:1835px;top:786px" width="65" height="65"><use href="#play" width="65" height="65"/></svg>
<svg style="left:1834px;top:883px" width="67" height="51"><use href="#hdd" width="67" height="51"/></svg>
<svg style="left:1847px;top:867px" width="41" height="42"><use href="#gear" width="41" height="42"/></svg>
<svg style="left:1834px;top:951px;overflow:hidden" width="68" height="65"><ellipse cx="34" cy="64" rx="26" ry="2.5" fill="#000" opacity="0.18"/><use href="#gear" x="1" y="0" width="66" height="68"/></svg>
<div class="a" style="left:1821px;top:1016px;width:97px;height:22px;background:linear-gradient(#d6d6d6,#cdcdcd);border-top:1px solid #a8a8a8"></div>
<div class="a" style="left:1790px;top:1025px;width:103px;height:2px;background:linear-gradient(90deg,#555 0%,#555 30%,#aaa 31%,#bbb 100%)"></div>
<svg style="left:1801px;top:1019px" width="14" height="14"><circle cx="7" cy="7" r="5.8" fill="#f2f2f2" stroke="#999" stroke-width="1"/><circle cx="7" cy="7" r="1.8" fill="#555"/></svg>
<svg style="left:1900px;top:1022px" width="16" height="15"><path d="M15 2 L2 15 M15 7 L7 15 M15 11 L11 15" stroke="#555" stroke-width="1.3"/></svg>
<div class="a" style="left:1918px;top:1016px;width:2px;height:25px;background:#333"></div>
<svg style="left:1630px;top:972px" width="78" height="70"><g transform="rotate(14 38 33)"><defs><linearGradient id="wm" x1="0" y1="0" x2="0.3" y2="1"><stop offset="0" stop-color="#f4f8ff"/><stop offset="0.45" stop-color="#b8c8f0"/><stop offset="1" stop-color="#5a78d0"/></linearGradient></defs>
<rect x="14.5" y="9.5" width="47" height="47" rx="5" fill="url(#wm)" stroke="#c4c4cc" stroke-width="2" opacity="0.85"/>
<path d="M26 22 L49 44 M49 22 L26 44" stroke="#fff" stroke-width="5.5" opacity="0.95"/></g></svg>
<div class="a" style="left:1703px;top:992px;font-size:24.5px;line-height:30px;font-weight:bold;color:rgba(178,186,226,0.75);-webkit-text-stroke:0.7px rgba(110,124,186,0.6);white-space:nowrap;transform:scaleX(0.726);transform-origin:0 0">xtremehardware.com</div></body></html>
